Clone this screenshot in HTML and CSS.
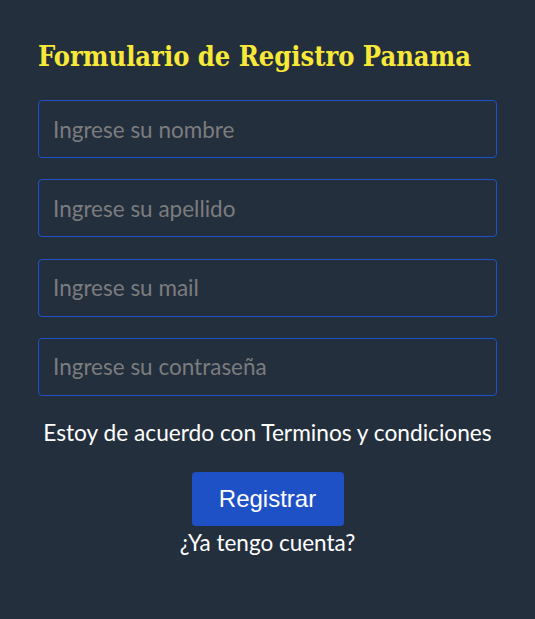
FILE: index.html
```html
<!DOCTYPE html>
<html lang="es">
<head>
<meta charset="utf-8">
<title>Formulario de Registro</title>
<link rel="stylesheet" href="styles.css">
</head>
<body>
<form class="form">
  <h1 class="title">Formulario de Registro Panama</h1>
  <div class="fields">
    <input class="field" type="text" placeholder="Ingrese su nombre">
    <input class="field" type="text" placeholder="Ingrese su apellido">
    <input class="field" type="email" placeholder="Ingrese su mail">
    <input class="field" type="password" placeholder="Ingrese su contraseña">
  </div>
  <p class="terms">Estoy de acuerdo con Terminos y condiciones</p>
  <button class="btn" type="button">Registrar</button>
  <p class="account">¿Ya tengo cuenta?</p>
</form>
</body>
</html>
```
FILE: styles.css
```css
html, body {
  margin: 0;
  padding: 0;
  background: #242f3d;
}
.form {
  width: 459px;
  padding: 38px 38px 0 38px;
  display: flex;
  flex-direction: column;
  align-items: center;
}
.title {
  align-self: flex-start;
  margin: 0;
  height: 62px;
  font-family: "DejaVu Serif Condensed", "DejaVu Serif", serif;
  font-stretch: condensed;
  font-weight: bold;
  font-size: 27px;
  line-height: 38px;
  color: #f8e838;
}
.fields {
  width: 100%;
  display: flex;
  flex-direction: column;
  gap: 21.3px;
}
.field {
  box-sizing: border-box;
  width: 100%;
  height: 58px;
  background: #242f3d;
  border: 1px solid #1f51c9;
  border-radius: 4px;
  padding: 0 14px;
  font-family: "Lato", sans-serif;
  font-size: 22.5px;
  color: #ffffff;
  outline: none;
}
.field::placeholder {
  color: #7b7c7e;
}
.terms {
  margin: 22px 0 0 0;
  font-family: "Lato", sans-serif;
  font-size: 22.7px;
  line-height: 30px;
  color: #ffffff;
}
.btn {
  margin-top: 24px;
  width: 152px;
  height: 54px;
  border: none;
  border-radius: 4px;
  background: #1f51c6;
  color: #ffffff;
  font-family: "Liberation Sans", Arial, sans-serif;
  font-size: 24px;
}
.account {
  margin: 2px 0 0 0;
  font-family: "Lato", sans-serif;
  font-size: 22.5px;
  line-height: 30px;
  color: #ffffff;
}
```
